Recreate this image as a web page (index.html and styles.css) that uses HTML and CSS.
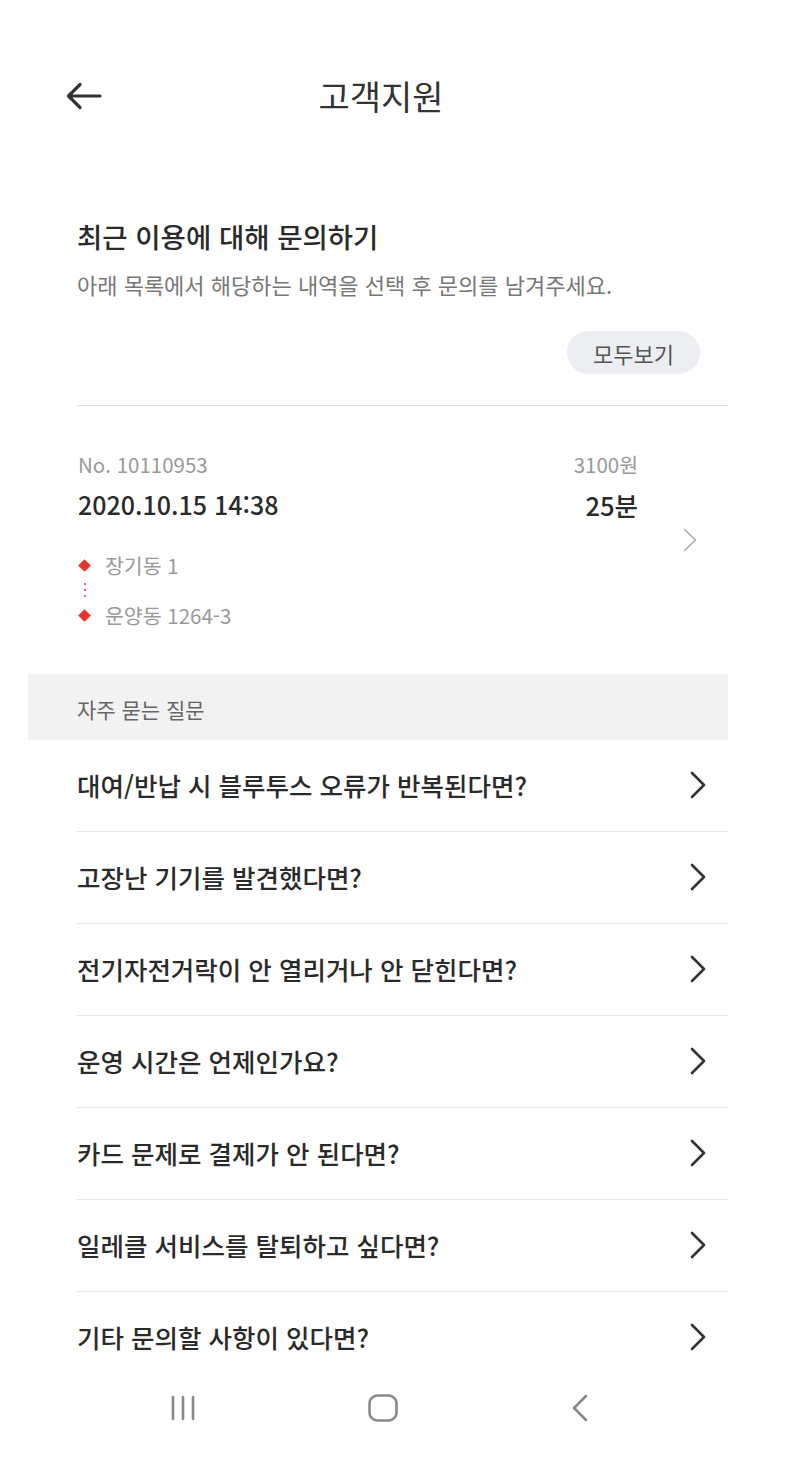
FILE: index.html
```html
<!DOCTYPE html>
<html lang="ko">
<head>
<meta charset="utf-8">
<link rel="stylesheet" href="styles.css">
</head>
<body>
<div class="page">
  <main class="main">
    <header class="header">
      <svg class="back" width="36" height="28" viewBox="0 0 36 28">
        <path d="M34 14H3M14 2.5L2.5 14L14 25.5" fill="none" stroke="#333" stroke-width="3.2" stroke-linecap="round" stroke-linejoin="round"/>
      </svg>
      <h1 class="title">고객지원</h1>
    </header>

    <section class="recent">
      <h2 class="recent-title">최근 이용에 대해 문의하기</h2>
      <p class="recent-sub">아래 목록에서 해당하는 내역을 선택 후 문의를 남겨주세요.</p>
      <div class="btn-row"><button class="all-btn">모두보기</button></div>
    </section>

    <div class="card">
      <div class="info">
        <div class="line1"><span class="no">No. 10110953</span><span class="price">3100원</span></div>
        <div class="line2"><span class="date">2020.10.15 14:38</span><span class="dur">25분</span></div>
        <div class="route">
          <div class="stop"><span class="diamond"></span><span class="place">장기동 1</span></div>
          <div class="dots"><i></i><i></i><i></i></div>
          <div class="stop"><span class="diamond"></span><span class="place">운양동 1264-3</span></div>
        </div>
      </div>
      <svg class="card-chev" width="14" height="24" viewBox="0 0 14 24">
        <path d="M1.5 1.5L12.5 12L1.5 22.5" fill="none" stroke="#aaa" stroke-width="1.6" stroke-linecap="round" stroke-linejoin="round"/>
      </svg>
    </div>

    <div class="faq-head">자주 묻는 질문</div>
    <ul class="faq">
      <li class="faq-row"><span>대여/반납 시 블루투스 오류가 반복된다면?</span><svg class="chev" width="16" height="28" viewBox="0 0 16 28"><path d="M2 2L14 14L2 26" fill="none" stroke="#333" stroke-width="2.6" stroke-linecap="round" stroke-linejoin="round"/></svg></li>
      <li class="faq-row"><span>고장난 기기를 발견했다면?</span><svg class="chev" width="16" height="28" viewBox="0 0 16 28"><path d="M2 2L14 14L2 26" fill="none" stroke="#333" stroke-width="2.6" stroke-linecap="round" stroke-linejoin="round"/></svg></li>
      <li class="faq-row"><span>전기자전거락이 안 열리거나 안 닫힌다면?</span><svg class="chev" width="16" height="28" viewBox="0 0 16 28"><path d="M2 2L14 14L2 26" fill="none" stroke="#333" stroke-width="2.6" stroke-linecap="round" stroke-linejoin="round"/></svg></li>
      <li class="faq-row"><span>운영 시간은 언제인가요?</span><svg class="chev" width="16" height="28" viewBox="0 0 16 28"><path d="M2 2L14 14L2 26" fill="none" stroke="#333" stroke-width="2.6" stroke-linecap="round" stroke-linejoin="round"/></svg></li>
      <li class="faq-row"><span>카드 문제로 결제가 안 된다면?</span><svg class="chev" width="16" height="28" viewBox="0 0 16 28"><path d="M2 2L14 14L2 26" fill="none" stroke="#333" stroke-width="2.6" stroke-linecap="round" stroke-linejoin="round"/></svg></li>
      <li class="faq-row"><span>일레클 서비스를 탈퇴하고 싶다면?</span><svg class="chev" width="16" height="28" viewBox="0 0 16 28"><path d="M2 2L14 14L2 26" fill="none" stroke="#333" stroke-width="2.6" stroke-linecap="round" stroke-linejoin="round"/></svg></li>
      <li class="faq-row"><span>기타 문의할 사항이 있다면?</span><svg class="chev" width="16" height="28" viewBox="0 0 16 28"><path d="M2 2L14 14L2 26" fill="none" stroke="#333" stroke-width="2.6" stroke-linecap="round" stroke-linejoin="round"/></svg></li>
    </ul>
  </main>

  <nav class="navbar">
    <svg width="28" height="28" viewBox="0 0 28 28"><path d="M4 3V25M14 3V25M24 3V25" stroke="#888" stroke-width="2.6" stroke-linecap="round"/></svg>
    <svg width="30" height="28" viewBox="0 0 30 28"><rect x="1.5" y="1.5" width="27" height="25" rx="8" fill="none" stroke="#888" stroke-width="2.6"/></svg>
    <svg width="20" height="28" viewBox="0 0 20 28"><path d="M16 2L4 14L16 26" fill="none" stroke="#888" stroke-width="2.6" stroke-linecap="round" stroke-linejoin="round"/></svg>
  </nav>
</div>
</body>
</html>
```

FILE: styles.css
```css
* { box-sizing: border-box; }

html, body {
  margin: 0;
  padding: 0;
  background: #fff;
}

body {
  font-family: "Noto Sans CJK KR", "Noto Sans", sans-serif;
  color: #222;
}

.page {
  width: 796px;
  height: 1466px;
  display: flex;
  flex-direction: column;
  overflow: hidden;
}

.main {
  height: 1370px;
  overflow: hidden;
  margin-left: 28px;
  width: 700px;
}

.header {
  height: 192px;
  display: flex;
  align-items: center;
  position: relative;
}

.back {
  position: absolute;
  left: 38px;
  top: 82px;
}

.title {
  margin: 0 auto;
  font-size: 34px;
  font-weight: 400;
  color: #333;
  line-height: 1;
  padding-left: 6px;
}

.recent {
  padding-left: 49px;
  padding-top: 26px;
}

.recent-title {
  margin: 0;
  font-size: 27.5px;
  font-weight: 500;
  line-height: 36px;
  color: #2a2a2a;
}

.recent-sub {
  margin: 15px 0 0;
  font-size: 22px;
  line-height: 30px;
  color: #777;
}

.btn-row {
  display: flex;
  justify-content: flex-end;
  margin-top: 32px;
  padding-right: 28px;
  padding-bottom: 31px;
  border-bottom: 1px solid #dcdcdc;
}

.all-btn {
  font-family: inherit;
  border: 0;
  background: #eceef2;
  color: #555;
  height: 43px;
  width: 133px;
  border-radius: 22px;
  font-size: 22px;
  padding: 0;
}

.card {
  margin-left: 49px;
  padding: 45px 31px 45px 1px;
  display: flex;
  align-items: center;
}

.info {
  flex: 1;
  margin-right: 45px;
}

.line1, .line2 {
  display: flex;
  justify-content: space-between;
  align-items: center;
}

.line1 {
  height: 26px;
  font-size: 20.5px;
  color: #999;
}

.line2 {
  margin-top: 11px;
  height: 32px;
  font-size: 25px;
  font-weight: 500;
  color: #2a2a2a;
}

.dur { font-size: 25.5px; }

.route {
  margin-top: 31px;
  display: flex;
  flex-direction: column;
}

.stop {
  display: flex;
  align-items: center;
  height: 28px;
}

.diamond {
  width: 9px;
  height: 9px;
  background: #e8332a;
  transform: rotate(45deg);
  margin-left: 2px;
  margin-right: 16px;
}

.place {
  font-size: 20.5px;
  color: #999;
}

.dots {
  height: 22px;
  display: flex;
  flex-direction: column;
  justify-content: center;
  gap: 4px;
  padding-left: 5.5px;
}

.dots i {
  display: block;
  width: 2px;
  height: 2px;
  background: #e8332a;
  border-radius: 1px;
}

.faq-head {
  height: 66px;
  background: #f2f2f2;
  padding-left: 49px;
  padding-top: 3px;
  display: flex;
  align-items: center;
  font-size: 21px;
  color: #666;
}

.faq {
  list-style: none;
  margin: 0 0 0 49px;
  padding: 0;
}

.faq-row {
  height: 92px;
  border-bottom: 1px solid #e6e6e6;
  display: flex;
  align-items: center;
  justify-content: space-between;
  padding-right: 22px;
  padding-bottom: 2px;
  font-size: 25.5px;
  font-weight: 500;
  color: #2a2a2a;
}

.navbar {
  height: 76px;
  display: flex;
  align-items: center;
}

.navbar svg:nth-child(1) { margin-left: 169px; }
.navbar svg:nth-child(2) { margin-left: 171px; }
.navbar svg:nth-child(3) { margin-left: 172px; }
```
